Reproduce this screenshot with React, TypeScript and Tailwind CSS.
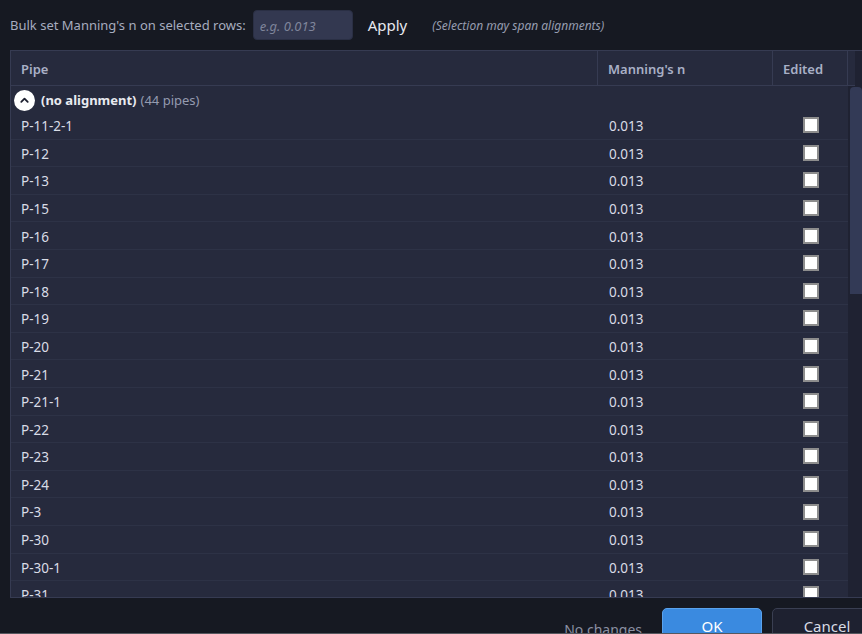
import React from "react";

const pipes = [
  "P-11-2-1",
  "P-12",
  "P-13",
  "P-15",
  "P-16",
  "P-17",
  "P-18",
  "P-19",
  "P-20",
  "P-21",
  "P-21-1",
  "P-22",
  "P-23",
  "P-24",
  "P-3",
  "P-30",
  "P-30-1",
  "P-31",
  "P-32",
];

function Checkbox() {
  return <div className="h-4 w-4 border-2 border-[#8d8d8d] bg-white" />;
}

export default function App() {
  return (
    <div className="relative flex h-[634px] w-[862px] flex-col overflow-hidden bg-[#161922] font-['Noto_Sans',sans-serif] text-[13px]">
      {/* Bulk set bar */}
      <div className="flex h-[50px] shrink-0 items-start pl-[10px] pt-[10px]">
        <div className="flex h-[30px] items-center">
          <span className="pt-[2px] text-[#a6acbf]">Bulk set Manning's n on selected rows:</span>
          <input
            placeholder="e.g. 0.013"
            className="ml-[7px] h-[30px] w-[100px] rounded-[4px] border border-[#2a2f44] bg-[#333850] px-[6px] pt-[2px] text-[13px] italic text-[#dfe2ea] outline-none placeholder:text-[#7f859b]"
          />
          <button className="ml-[15px] pt-[1px] text-[15px] text-[#e6e8ef]">Apply</button>
          <span className="ml-[25px] pt-[2px] text-[12px] italic text-[#979db0]">
            (Selection may span alignments)
          </span>
        </div>
      </div>

      {/* Table */}
      <div className="ml-[10px] flex h-[548px] w-[860px] shrink-0 flex-col border border-[#363b52] bg-[#262a3d]">
        <div className="flex h-[35px] shrink-0">
          <div className="flex flex-1 items-center border-b border-[#363b52]">
            <div className="flex h-full w-[587px] items-center border-r border-[#363b52] pl-[10px] pt-[3px] font-semibold text-[#a9b0c6]">
              Pipe
            </div>
            <div className="flex h-full w-[175px] items-center border-r border-[#363b52] pl-[10px] pt-[3px] font-semibold text-[#a9b0c6]">
              Manning's n
            </div>
            <div className="flex h-full w-[75px] items-center border-r border-[#363b52] pl-[10px] pt-[3px] font-semibold text-[#a9b0c6]">
              Edited
            </div>
          </div>
          <div className="w-[14px] bg-[#1f2232]" />
        </div>

        <div className="flex min-h-0 flex-1">
          <div className="w-[837px] overflow-hidden">
            <div className="flex h-[26px] items-center pl-[3px] pt-[2px]">
              <div className="flex h-[21px] w-[21px] items-center justify-center rounded-full bg-white">
                <svg width="11" height="11" viewBox="0 0 24 24" fill="none" stroke="#1d2030" strokeWidth="4" strokeLinecap="round" strokeLinejoin="round">
                  <path d="M5 15l7-7 7 7" />
                </svg>
              </div>
              <span className="ml-[6px] pt-[1px] font-bold text-[#e8eaf0]">(no alignment)</span>
              <span className="ml-[4px] pt-[1px] text-[#959bb0]">(44 pipes)</span>
            </div>
            {pipes.map((p) => (
              <div key={p} className="flex h-[27.6px] items-center border-b border-[#2d3246] text-[13.5px] text-[#d9dce6]">
                <div className="w-[588px] pl-[10px] pt-[2px]">{p}</div>
                <div className="w-[175px] pl-[10px] pt-[2px]">0.013</div>
                <div className="flex w-[74px] justify-center">
                  <Checkbox />
                </div>
              </div>
            ))}
          </div>
          <div className="w-[14px] bg-[#1f2232] pl-[2px] pt-[1px]">
            <div className="h-[207px] w-full rounded-t-[4px] bg-[#333a56]" />
          </div>
        </div>
      </div>

      {/* Footer */}
      <div className="flex h-[35px] shrink-0 items-start justify-end overflow-hidden pt-[10px]">
        <span className="mr-[20px] mt-[11px] text-[14px] text-[#8b90a3]">No changes</span>
        <button className="h-[40px] w-[100px] rounded-[5px] border border-[#5aa2ec] bg-[#3a8ae0] pb-[3px] text-[15px] text-white">
          OK
        </button>
        <button className="ml-[10px] mr-[-20px] h-[40px] w-[110px] rounded-[5px] border border-[#3a3f52] bg-[#1e2130] pb-[3px] text-[15px] text-[#d8dbe4]">
          Cancel
        </button>
      </div>
      <div className="h-px shrink-0 bg-[#55585f]" />
    </div>
  );
}
